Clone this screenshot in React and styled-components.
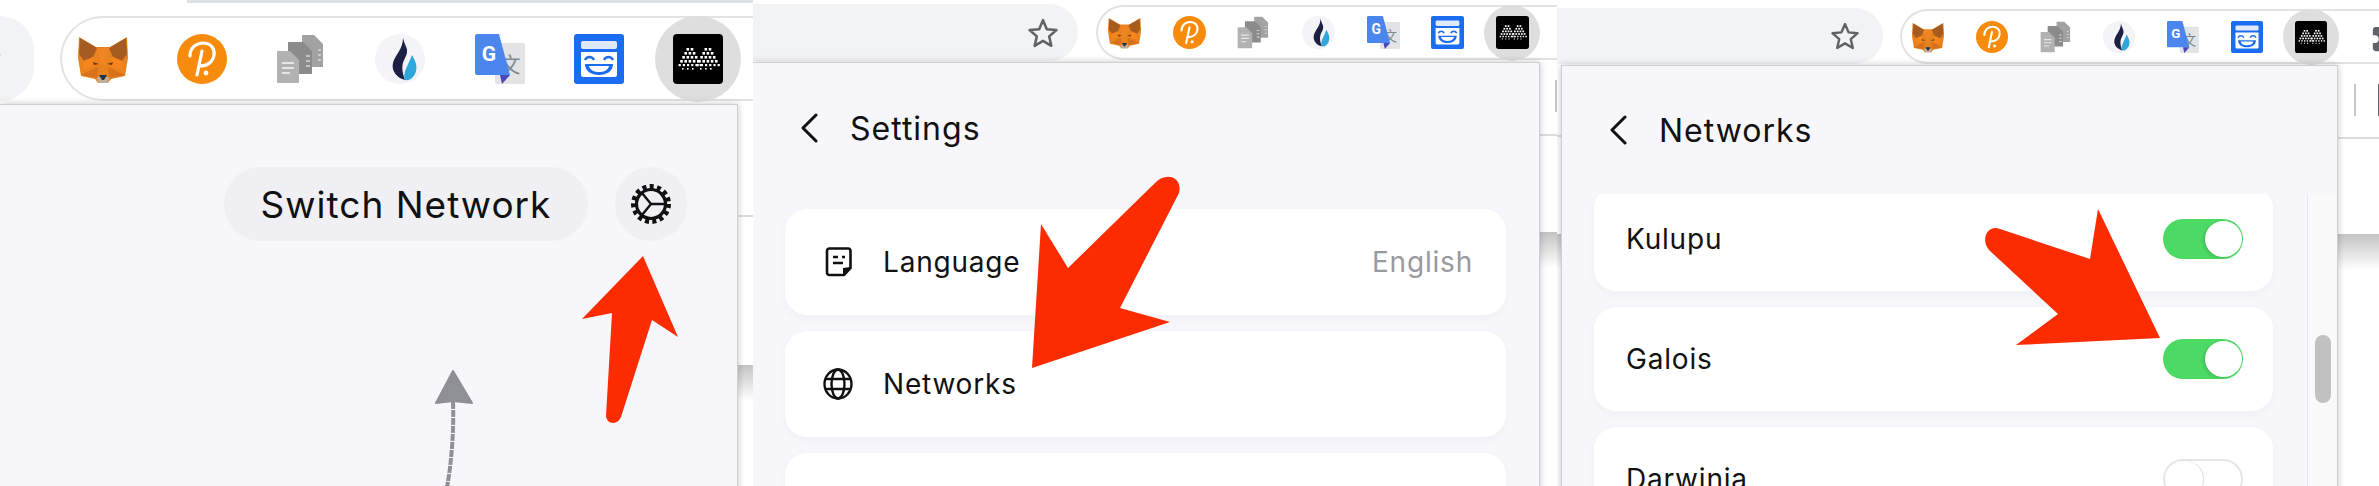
import styled, { createGlobalStyle } from "styled-components";
import { MdExtension } from "react-icons/md";

const GlobalStyle = createGlobalStyle`
  html, body {
    margin: 0;
    padding: 0;
    background: #fff;
    overflow: hidden;
  }
  * {
    box-sizing: border-box;
  }
`;

const Page = styled.div`
  display: flex;
  width: 2379px;
  height: 486px;
  font-family: "Inter", "Open Sans", sans-serif;
  color: #111;
  overflow: hidden;
`;
const Shot = styled.section`
  position: relative;
  flex: none;
  width: ${(p) => p.$width}px;
  height: 486px;
  overflow: hidden;
  background: #fff;
`;
const TabEdge = styled.div`
  height: 3px;
  margin-left: 187px;
  background: #dee1e6;
`;
const Toolbar = styled.div`
  display: flex;
  height: ${(p) => p.$height}px;
  padding-top: ${(p) => p.$top}px;
`;
const AddressEnd = styled.div`
  flex: none;
  display: flex;
  align-items: center;
  justify-content: flex-end;
  width: ${(p) => p.$width}px;
  height: ${(p) => p.$height}px;
  padding-right: ${(p) => p.$gap}px;
  border-radius: 0 ${(p) => p.$height / 2}px ${(p) => p.$height / 2}px 0;
  background: #f1f3f4;
`;
const ExtensionPill = styled.div`
  flex: 1;
  display: flex;
  align-items: center;
  height: ${(p) => p.$height}px;
  margin: ${(p) => p.$top}px 0 0 ${(p) => p.$left}px;
  padding-left: ${(p) => p.$pad}px;
  gap: ${(p) => p.$gap}px;
  border: 2px solid #e3e3e6;
  border-right: 0;
  border-radius: ${(p) => p.$height / 2}px 0 0 ${(p) => p.$height / 2}px;
  background: #fff;
`;
const ActiveIcon = styled.div`
  flex: none;
  display: flex;
  align-items: center;
  justify-content: center;
  width: ${(p) => p.$size}px;
  height: ${(p) => p.$size}px;
  margin: 0 ${(p) => -p.$inset}px;
  border-radius: 50%;
  background: #dedede;
`;
const PuzzleSlot = styled.div`
  flex: none;
  display: flex;
  margin-left: 11px;
  color: #5f6368;
`;
const Body = styled.div`
  display: flex;
  height: 100%;
`;
const Popup = styled.div`
  position: relative;
  z-index: 1;
  flex: none;
  display: flex;
  flex-direction: column;
  width: ${(p) => p.$width}px;
  height: 100%;
  border: 1px solid #cfcfd2;
  border-width: 1px 1px 0 ${(p) => (p.$noLeft ? 0 : 1)}px;
  background: #f6f6fb;
  box-shadow: 0 0 7px rgba(0, 0, 0, 0.22);
`;
const SideStrip = styled.div`
  flex: ${(p) => (p.$width ? "none" : 1)};
  width: ${(p) => (p.$width ? `${p.$width}px` : "auto")};
  display: flex;
  flex-direction: column;
`;
const PageRule = styled.div`
  flex: none;
  height: 2px;
  margin-top: ${(p) => p.$top}px;
  background: #dcdcdc;
`;
const PageShade = styled.div`
  flex: none;
  height: 36px;
  margin-top: ${(p) => p.$top}px;
  background: linear-gradient(#c4c4c4, #fff);
`;
const PageMarks = styled.div`
  flex: none;
  display: flex;
  height: 32px;
  margin-top: ${(p) => p.$top}px;
  padding-left: ${(p) => p.$left}px;
  gap: 22px;
`;
const PageDivider = styled.div`
  flex: none;
  width: 2px;
  background: #c6c6c6;
`;
const PageBlock = styled.div`
  flex: none;
  width: 4px;
  background: #5f6368;
`;
const SwitchRow = styled.div`
  display: flex;
  justify-content: flex-end;
  gap: 27px;
  padding: 62px 50px 0 0;
`;
const SwitchButton = styled.div`
  display: flex;
  align-items: center;
  justify-content: center;
  width: 364px;
  height: 74px;
  border-radius: 37px;
  background: #efeff4;
  font-size: 37px;
  letter-spacing: 1px;
`;
const GearButton = styled.div`
  display: flex;
  align-items: center;
  justify-content: center;
  width: 72px;
  height: 74px;
  border-radius: 37px;
  background: #efeff4;
`;
const Header = styled.div`
  display: flex;
  align-items: center;
  flex: none;
  height: ${(p) => p.$height}px;
  margin-bottom: ${(p) => p.$after}px;
  padding-left: ${(p) => p.$left}px;
  gap: 32px;
  font-size: 32px;
  letter-spacing: 1px;
`;
const CardList = styled.div`
  display: flex;
  flex-direction: column;
  gap: 16px;
  padding: 0 ${(p) => p.$right}px 0 32px;
`;
const Card = styled.div`
  flex: none;
  display: flex;
  align-items: center;
  justify-content: space-between;
  height: ${(p) => p.$height}px;
  padding: 0 ${(p) => p.$right}px 0 ${(p) => p.$left}px;
  border-radius: 22px;
  background: #fff;
  box-shadow: 0 3px 8px rgba(40, 40, 80, 0.04);
  font-size: 28px;
  letter-spacing: 0.8px;
`;
const CardLabel = styled.div`
  display: flex;
  align-items: center;
  gap: 30px;
`;
const CardValue = styled.span`
  color: #99999e;
`;
const ListRow = styled.div`
  display: flex;
  flex: 1;
  min-height: 0;
`;
const ListClip = styled.div`
  flex: 1;
  overflow: hidden;
`;
const ShiftedList = styled(CardList)`
  margin-top: -8px;
`;
const ScrollTrack = styled.div`
  flex: none;
  width: 30px;
  padding: 141px 6px 0 7px;
  border-left: 1px solid #e9e9ea;
  background: #f9f9f9;
`;
const ScrollThumb = styled.div`
  height: 68px;
  border-radius: 8px;
  background: #c1c1c1;
`;
const Toggle = styled.div`
  flex: none;
  display: flex;
  justify-content: ${(p) => (p.$on ? "flex-end" : "flex-start")};
  align-items: center;
  width: 80px;
  height: 40px;
  padding: 1px;
  border: ${(p) => (p.$on ? 0 : "2px solid #e6e6e9")};
  border-radius: 20px;
  background: ${(p) => (p.$on ? "#4cd964" : "#fff")};
`;
const ToggleKnob = styled.div`
  width: 37px;
  height: 36px;
  border-radius: 50%;
  background: #fff;
  box-shadow: ${(p) => (p.$on ? "-2px 1px 3px rgba(0,0,0,0.12)" : "1px 0 1px rgba(0,0,0,0.14)")};
`;
const Arrow = styled.svg`
  position: absolute;
  z-index: 2;
  left: ${(p) => p.$left}px;
  top: ${(p) => p.$top}px;
  overflow: visible;
`;
const SketchArrow = styled.svg`
  position: absolute;
  left: 430px;
  top: 161px;
  overflow: visible;
`;

const Fox = ({ size }) => (
  <svg width={size} height={size} viewBox="0 0 50 50">
    <path d="M1 3L18 13H32L49 3L50 24L47 42L33 45L30 49H20L17 45L3 42L0 24Z" fill="#e8821e" />
    <path d="M2 4L19 14L15 23L6 27L1 20Z" fill="#a65c21" />
    <path d="M48 4L31 14L35 23L44 27L49 20Z" fill="#a65c21" />
    <path d="M6 27L15 23L20 31L5 36Z" fill="#f6851b" />
    <path d="M44 27L35 23L30 31L45 36Z" fill="#f6851b" />
    <path d="M19 14H31L28 31H22Z" fill="#ee8522" />
    <path d="M3 41L20 33L19 44Z" fill="#d9711a" />
    <path d="M47 41L30 33L31 44Z" fill="#d9711a" />
    <path d="M15 28L21 30L16 31Z" fill="#5c3a1a" />
    <path d="M35 28L29 30L34 31Z" fill="#5c3a1a" />
    <path d="M19 43H31L30 49H20Z" fill="#c0ac9d" />
    <path d="M21 41H29L26 46H24Z" fill="#233447" />
  </svg>
);

const Polkadot = ({ size }) => (
  <svg width={size} height={size} viewBox="0 0 50 50">
    <circle cx="25" cy="25" r="25" fill="#f78c0c" />
    <path d="M13 22C13 13 20 9 26 9C34 9 38 15 37 21C36 28 30 32 23 32" fill="none" stroke="#fff" strokeWidth="3.2" strokeLinecap="round" />
    <path d="M25 17L20 41" fill="none" stroke="#fff" strokeWidth="3.2" strokeLinecap="round" />
    <circle cx="29" cy="39" r="2.4" fill="#fff" />
  </svg>
);

const Docs = ({ size }) => (
  <svg width={size} height={size} viewBox="0 0 50 50">
    <path d="M26 1H38L47 10V33H26Z" fill="#a2a2a2" />
    <path d="M12 8H27L36 17V40H12Z" fill="#8b8b8b" />
    <path d="M1 17H14L23 26V49H1Z" fill="#b2b2b2" />
    <path d="M6 29H18M6 34H18M6 39H14" stroke="#e6e6e6" strokeWidth="1.8" />
    <path d="M30 22H34M30 27H34M30 32H34M42 16H45M42 21H45M42 26H45" stroke="#d6d6d6" strokeWidth="1.6" />
  </svg>
);

const Huobi = ({ size }) => (
  <svg width={size} height={size} viewBox="0 0 50 50">
    <ellipse cx="25" cy="25" rx="25" ry="25" fill="#f4f4f7" />
    <path d="M28 4C30 13 35 15 30 24C26 31 27 38 30 46C22 44 16 37 18 29C20 21 28 15 28 4Z" fill="#1c2143" />
    <path d="M37 21C41 28 43 33 40 40C38 44 34 47 30 46C27 39 33 32 37 21Z" fill="#2ea7dc" />
  </svg>
);

const Translate = ({ size }) => (
  <svg width={size} height={size} viewBox="0 0 50 50">
    <rect x="20" y="9" width="30" height="41" rx="2" fill="#e2e3e4" />
    <text x="35" y="38" fontSize="21" fontFamily="'Noto Sans CJK SC', sans-serif" textAnchor="middle" fill="#7c8a8f">文</text>
    <path d="M2 0H24L35 41H2C1 41 0 40 0 39V2C0 1 1 0 2 0Z" fill="#4a86ee" />
    <path d="M35 41L27 50L25 41Z" fill="#4b47b8" />
    <text x="14" y="27" fontSize="21" fontWeight="700" fontFamily="'Roboto', sans-serif" textAnchor="middle" fill="#fff">G</text>
  </svg>
);

const Mask = ({ size }) => (
  <svg width={size} height={size} viewBox="0 0 50 50">
    <rect width="50" height="50" rx="3" fill="#1a6cf0" />
    <rect x="7" y="7" width="36" height="8" rx="2" fill="#dfe9fb" />
    <path d="M7 18H43V41C43 42 42 43 41 43H9C8 43 7 42 7 41Z" fill="#fff" />
    <path d="M11 26C13 22 18 22 20 26M30 26C32 22 37 22 39 26" fill="none" stroke="#1a6cf0" strokeWidth="2.4" />
    <path d="M11 30H39C39 37 33 41 25 41C17 41 11 37 11 30Z" fill="#1a6cf0" />
    <path d="M15 32H35C34 36 30 38 25 38C20 38 16 36 15 32Z" fill="#fff" />
  </svg>
);

// two peaks of white squares, row by row: [x of first, count, square size, step, y]
const PEAK_ROWS = [
  [13.5, 2, 2.6, 4.2, 14],
  [11.4, 3, 2.6, 4.2, 18],
  [9.3, 4, 2.6, 4.2, 22],
  [7.2, 5, 2.6, 4.2, 26],
  [5.6, 6, 2.2, 4.2, 30],
  [9, 3, 1.6, 5, 34],
];

const Maker = ({ size }) => (
  <svg width={size} height={size} viewBox="0 0 50 50">
    <rect width="50" height="50" rx="4" fill="#000" />
    {PEAK_ROWS.flatMap(([x, count, dot, step, y]) =>
      [0, 18].flatMap((shift) =>
        Array.from({ length: count }, (_, i) => (
          <rect key={`${y}-${shift}-${i}`} x={x + shift + i * step} y={y} width={dot} height={dot} fill="#fff" />
        ))
      )
    )}
  </svg>
);

const Star = ({ size }) => (
  <svg width={size} height={size} viewBox="0 0 30 30" style={{ flex: "none" }}>
    <path d="M15 3L18.6 11.4L27.6 12.2L20.8 18.2L22.8 27L15 22.4L7.2 27L9.2 18.2L2.4 12.2L11.4 11.4Z" fill="none" stroke="#5f6368" strokeWidth="2.4" strokeLinejoin="round" />
  </svg>
);

const Chevron = () => (
  <svg width="18" height="30" viewBox="0 0 18 30">
    <path d="M16 2L3 15L16 28" fill="none" stroke="#111" strokeWidth="3" strokeLinecap="round" strokeLinejoin="round" />
  </svg>
);

const Gear = () => (
  <svg width="42" height="40" viewBox="0 0 42 40">
    <circle cx="21" cy="20" r="17.5" fill="none" stroke="#111" strokeWidth="5" strokeDasharray="4 3.33" />
    <circle cx="21" cy="20" r="14.5" fill="none" stroke="#111" strokeWidth="3.2" />
    <path d="M12 9L21 20L12 31M21 20H34" fill="none" stroke="#111" strokeWidth="2.4" />
  </svg>
);

const NoteIcon = () => (
  <svg width="30" height="30" viewBox="0 0 30 30">
    <path d="M4 4C4 2.5 5 1.5 6.5 1.5H25C26.5 1.5 27.5 2.5 27.5 4V21L21 28H6.5C5 28 4 27 4 25.5Z" fill="none" stroke="#111" strokeWidth="2.6" />
    <path d="M27.5 20L20 21V28.5Z" fill="#111" />
    <path d="M10 10H15M19 10H22M10 16H20" stroke="#111" strokeWidth="2.6" />
  </svg>
);

const GlobeIcon = () => (
  <svg width="30" height="32" viewBox="0 0 30 32">
    <ellipse cx="15" cy="16" rx="13.5" ry="14.5" fill="none" stroke="#111" strokeWidth="2.4" />
    <ellipse cx="15" cy="16" rx="6.5" ry="14.5" fill="none" stroke="#111" strokeWidth="2.4" />
    <path d="M2.5 11H27.5M2.5 21H27.5" stroke="#111" strokeWidth="2.4" />
  </svg>
);

const TOOLBAR_ICONS = [Fox, Polkadot, Docs, Huobi, Translate, Mask];

function Extensions({ height, top, left, pad, gap, icon, inset, children }) {
  return (
    <ExtensionPill $height={height} $top={top} $left={left} $pad={pad} $gap={gap}>
      {TOOLBAR_ICONS.map((Icon, i) => (
        <Icon key={i} size={icon} />
      ))}
      <ActiveIcon $size={icon + inset * 2} $inset={inset}>
        <Maker size={icon} />
      </ActiveIcon>
      {children}
    </ExtensionPill>
  );
}

function App() {
  return (
    <Page>
      <GlobalStyle />

      <Shot $width={753}>
        <TabEdge />
        <Toolbar $height={101} $top={13}>
          <AddressEnd $width={34} $height={85} $gap={32}>
            <Star size={44} />
          </AddressEnd>
          <Extensions height={85} top={0} left={26} pad={16} gap={49.17} icon={50} inset={18} />
        </Toolbar>
        <Body>
          <Popup $width={738} $noLeft>
            <SwitchRow>
              <SwitchButton>Switch Network</SwitchButton>
              <GearButton>
                <Gear />
              </GearButton>
            </SwitchRow>
            <SketchArrow width="50" height="221" viewBox="0 0 50 221">
              <path d="M23 105L6 137L23 135L42 137Z" fill="#8f8f96" stroke="#8f8f96" strokeWidth="2" strokeLinejoin="round" />
              <path d="M23 136C24 160 22 195 17 221" fill="none" stroke="#8f8f96" strokeWidth="4" strokeDasharray="7 1" />
            </SketchArrow>
          </Popup>
          <SideStrip>
            <PageRule $top={111} />
            <PageShade $top={148} />
          </SideStrip>
        </Body>
        <Arrow $left={580} $top={254} width="100" height="172" viewBox="0 0 100 172">
          <path d="M63 2L98 83L72 66L41 163C38 171 27 171 26 162L32 59L2 65Z" fill="#fd2c00" />
        </Arrow>
      </Shot>

      <Shot $width={804}>
        <Toolbar $height={62} $top={4}>
          <AddressEnd $width={325} $height={57} $gap={19}>
            <Star size={32} />
          </AddressEnd>
          <Extensions height={55} top={1} left={18} pad={10} gap={31.67} icon={33} inset={11.5} />
        </Toolbar>
        <Body>
          <Popup $width={787} $noLeft>
            <Header $height={130} $after={16} $left={47}>
              <Chevron />
              <span>Settings</span>
            </Header>
            <CardList $right={33}>
              <Card $height={106} $left={38} $right={33}>
                <CardLabel>
                  <NoteIcon />
                  Language
                </CardLabel>
                <CardValue>English</CardValue>
              </Card>
              <Card $height={106} $left={38} $right={33}>
                <CardLabel>
                  <GlobeIcon />
                  Networks
                </CardLabel>
              </Card>
              <Card $height={106} $left={38} $right={33} />
            </CardList>
          </Popup>
          <SideStrip>
            <PageMarks $top={18} $left={15}>
              <PageDivider />
            </PageMarks>
            <PageRule $top={22} />
            <PageShade $top={96} />
          </SideStrip>
        </Body>
        <Arrow $left={277} $top={175} width="155" height="198" viewBox="0 0 155 198">
          <path d="M11 49L38 93L125 8C136 -4 153 2 149 18L90 133L140 147L2 193Z" fill="#fd2c00" />
        </Arrow>
      </Shot>

      <Shot $width={822}>
        <Toolbar $height={65} $top={8}>
          <AddressEnd $width={326} $height={56} $gap={23}>
            <Star size={30} />
          </AddressEnd>
          <Extensions height={55} top={1} left={17} pad={10} gap={31.83} icon={32} inset={12}>
            <PuzzleSlot>
              <MdExtension size={34} />
            </PuzzleSlot>
          </Extensions>
        </Toolbar>
        <Body>
          <SideStrip $width={4}>
            <PageRule $top={70} />
            <PageShade $top={97} />
          </SideStrip>
          <Popup $width={777}>
            <Header $height={128} $after={0} $left={47}>
              <Chevron />
              <span>Networks</span>
            </Header>
            <ListRow>
              <ListClip>
                <ShiftedList $right={34}>
                  <Card $height={105} $left={32} $right={30}>
                    Kulupu
                    <Toggle $on>
                      <ToggleKnob $on />
                    </Toggle>
                  </Card>
                  <Card $height={104} $left={32} $right={30}>
                    Galois
                    <Toggle $on>
                      <ToggleKnob $on />
                    </Toggle>
                  </Card>
                  <Card $height={104} $left={32} $right={30}>
                    Darwinia
                    <Toggle>
                      <ToggleKnob />
                    </Toggle>
                  </Card>
                </ShiftedList>
              </ListClip>
              <ScrollTrack>
                <ScrollThumb />
              </ScrollTrack>
            </ListRow>
          </Popup>
          <SideStrip>
            <PageMarks $top={19} $left={16}>
              <PageDivider />
              <PageBlock />
            </PageMarks>
            <PageRule $top={21} />
            <PageShade $top={95} />
          </SideStrip>
        </Body>
        <Arrow $left={423} $top={205} width="185" height="145" viewBox="0 0 185 145">
          <path d="M118 4L180 133L36 140L78 109L9 45C0 34 8 19 20 24L110 54Z" fill="#fd2c00" />
        </Arrow>
      </Shot>
    </Page>
  );
}

export default App;
